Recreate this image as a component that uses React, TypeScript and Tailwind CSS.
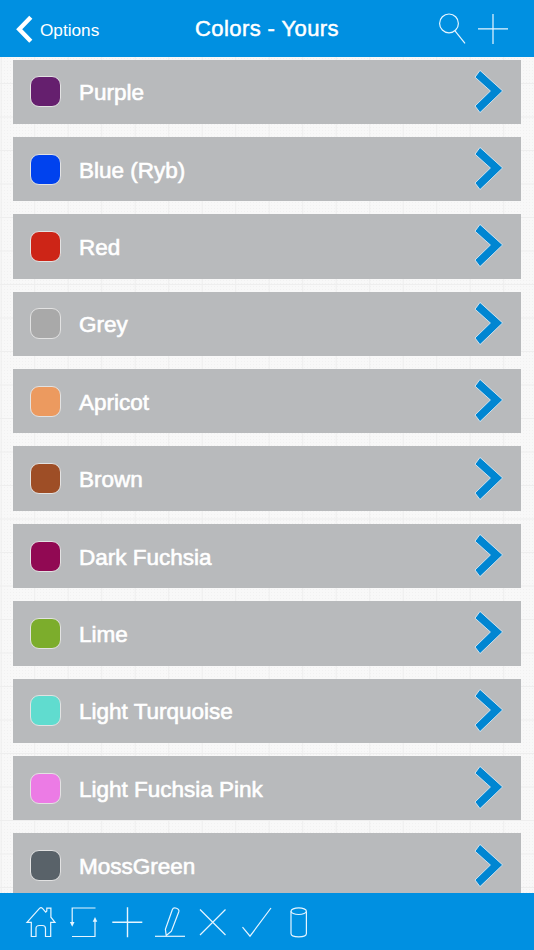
import type { ReactNode } from "react";

type Color = {
  name: string;
  swatch: string;
};

const colors: Color[] = [
  { name: "Purple", swatch: "bg-[#651f6e]" },
  { name: "Blue (Ryb)", swatch: "bg-[#0042ee]" },
  { name: "Red", swatch: "bg-[#cd2517]" },
  { name: "Grey", swatch: "bg-[#a9a9a9]" },
  { name: "Apricot", swatch: "bg-[#ec9a5f]" },
  { name: "Brown", swatch: "bg-[#9e4e26]" },
  { name: "Dark Fuchsia", swatch: "bg-[#910953]" },
  { name: "Lime", swatch: "bg-[#7cad2c]" },
  { name: "Light Turquoise", swatch: "bg-[#60dccf]" },
  { name: "Light Fuchsia Pink", swatch: "bg-[#ec7be5]" },
  { name: "MossGreen", swatch: "bg-[#596269]" },
];

function Icon({ label, children }: { label: string; children: ReactNode }) {
  return (
    <button type="button" aria-label={label} className="block h-8 w-8">
      <svg
        viewBox="0 0 32 32"
        className="h-8 w-8"
        fill="none"
        stroke="#e6f5ff"
        strokeWidth="1.2"
      >
        {children}
      </svg>
    </button>
  );
}

function Header() {
  return (
    <header className="grid h-[57px] shrink-0 grid-cols-[1fr_auto_1fr] items-center bg-[#0090e1] text-white">
      <button type="button" className="flex items-center pl-4">
        <svg viewBox="0 0 17 28" className="h-7 w-[17px]" fill="none">
          <path
            d="M14.8 2.2 3.2 14.2 14.8 26.2"
            stroke="white"
            strokeWidth="4.4"
          />
        </svg>
        <span className="pt-[3px] pl-[7px] text-[17.2px] leading-6">
          Options
        </span>
      </button>
      <h1 className="text-[22px] leading-7 tracking-[0.42px] [-webkit-text-stroke:0.5px_white]">
        Colors - Yours
      </h1>
      <div className="flex items-center justify-end gap-2 pr-[25px]">
        <Icon label="Search">
          <circle cx="12" cy="10.4" r="9.4" />
          <path d="M18 17.8 28 30.4" />
        </Icon>
        <Icon label="Add">
          <path d="M16 1v30M1 15.8h30" />
        </Icon>
      </div>
    </header>
  );
}

function ColorRow({ color }: { color: Color }) {
  return (
    <li className="flex h-[64.4px] shrink-0 items-center bg-[#b8babc] pr-[18px] pl-[17px]">
      <span
        className={`h-[31px] w-[31px] rounded-[9px] border border-[#e2e2e2] ${color.swatch}`}
      />
      <span className="grow pt-[3px] pl-[18px] text-[22.5px] leading-7 text-white [-webkit-text-stroke:0.6px_white]">
        {color.name}
      </span>
      <svg viewBox="0 0 28 44" className="h-11 w-7 overflow-visible">
        <path
          d="M5 0.4 27.6 20.9 5 42.6 0 36 15.4 21 0 7.2Z"
          fill="#0086d2"
          stroke="#d9e7ef"
          strokeWidth="0.9"
        />
      </svg>
    </li>
  );
}

function Toolbar() {
  return (
    <footer className="flex h-[57px] shrink-0 items-center gap-[11px] bg-[#0090e1] pl-[25px]">
      <Icon label="Home">
        <path d="M6.3 30.5V16.3H2L14.5 2.4Q16 1 17.5 2.4L20.7 6.2 21.8 5V2.2H25.9V11.2L30 16.3H25.7V30.5H20.5V22.5Q20.5 19.5 17.5 19.5H14.5Q11 19.5 11 22.5V30.5Z" />
      </Icon>
      <Icon label="Reorder">
        <path d="M27.5 2H4.2V18M4 30.5H27V15" />
        <path
          d="M1.9 16H6.5L4.2 20.8ZM24.7 15.8H29.3L27 11Z"
          fill="#e6f5ff"
          stroke="none"
        />
      </Icon>
      <Icon label="Add">
        <path d="M16.5 1.2v30M1.3 16.2h30" strokeWidth="1.4" />
      </Icon>
      <Icon label="Edit">
        <path d="M1 30.3H31" />
        <path d="M12.2 29.5 11.4 23.2 18.3 3.7Q19.2 1.2 22.4 2.2 25.6 3.2 24.8 5.8L17.4 25.2Z" />
      </Icon>
      <Icon label="Delete">
        <path d="M3 3.5 28.5 29M28.5 3.5 3 29" />
      </Icon>
      <Icon label="Confirm">
        <path d="M2.5 21.2 10 30.2 31 2" />
      </Icon>
      <Icon label="Storage">
        <ellipse cx="15.7" cy="5.2" rx="7.7" ry="3.3" />
        <path d="M8 5.2V27.5Q8 30.8 15.7 30.8T23.4 27.5V5.2" />
      </Icon>
    </footer>
  );
}

export default function App() {
  return (
    <div className="flex h-[950px] w-[534px] flex-col overflow-hidden font-['Liberation_Sans',Arial,sans-serif]">
      <Header />
      <main className="grow overflow-hidden bg-[#f8f8f8] bg-[linear-gradient(to_right,#eeeeee_1.3px,transparent_1.3px),linear-gradient(to_bottom,#eeeeee_1.3px,transparent_1.3px),radial-gradient(circle,#f1f1f1_0.9px,transparent_1px)] bg-[length:33.5px_33.5px,33.5px_33.5px,3px_3px] bg-[position:0.7px_0,0_26px,0_0]">
        <ul className="flex flex-col gap-[13px] px-[13px] pt-[2.5px]">
          {colors.map((color) => (
            <ColorRow key={color.name} color={color} />
          ))}
        </ul>
      </main>
      <Toolbar />
    </div>
  );
}
